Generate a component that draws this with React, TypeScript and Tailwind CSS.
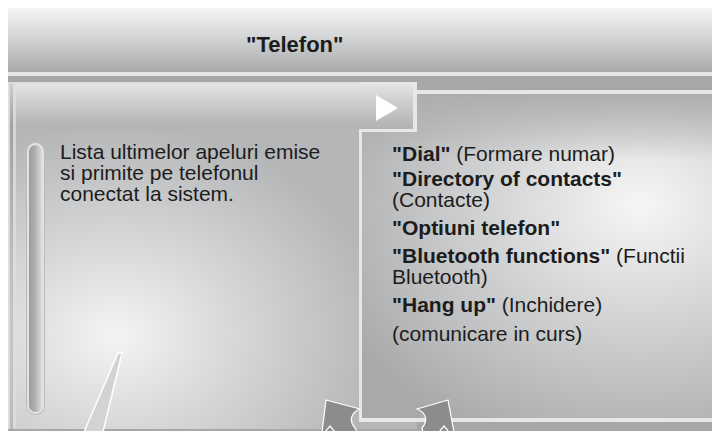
import React from "react";

const leftBg =
  "bg-fixed bg-[image:linear-gradient(to_bottom,rgba(229,230,231,0)_0px,rgba(229,230,231,0)_81px,#e6e7e8_82px,#cfd0d1_100px,#b3b4b6_126px,rgba(179,180,182,0)_132px),radial-gradient(ellipse_270px_210px_at_115px_335px,#f4f4f4_0%,#d6d7d8_45%,#b5b6b8_100%)]";

const rightBg =
  "bg-fixed bg-[image:linear-gradient(to_bottom,#acadaf_92px,rgba(172,173,175,0)_160px),radial-gradient(ellipse_340px_260px_at_640px_205px,#f6f6f6_0%,#d2d3d4_45%,#a8a9ab_100%)]";

function Item({ b, r }: { b: string; r?: string }) {
  return (
    <p>
      <span className="font-bold">"{b}"</span>
      {r ? ` ${r}` : ""}
    </p>
  );
}

export default function App() {
  return (
    <div className="relative w-[712px] h-[431px] overflow-hidden bg-white font-['Liberation_Sans',Arial,sans-serif] text-[#1c1c1c]">
      <div className="flex flex-col h-full pl-[8px] pt-[8px]">
        {/* Header */}
        <div className="h-[64px] bg-[linear-gradient(to_bottom,#f4f4f4,#d4d5d6_45%,#a7a8aa)] pl-[238px] pt-[26px]">
          <span className="font-bold text-[22px] leading-[22px]">"Telefon"</span>
        </div>
        <div className="h-[4px] bg-[#e4e5e6]" />

        {/* Body */}
        <div className="flex-1 grid bg-[#a6a7a9] grid-cols-[351px_58px_1fr] grid-rows-[6px_8px_42px_286px_4px_7px_2px]">
          {/* Left panel */}
          <div
            className={`col-start-1 col-end-3 row-start-2 row-end-7 border-l-2 border-t-2 border-[#dcdddf] flex ${leftBg}`}
          >
            <div className="w-[3px] bg-black/10" />
            <div className="w-[3px] mt-[4px] bg-[#dcdddf]/80" />
            <div className="flex items-start pl-[11px] pt-[59px]">
              <div className="w-[17px] h-[271px] rounded-full border-2 border-[#e1e2e3] bg-[linear-gradient(to_right,#9c9d9f,#abacae_40%,#cacbcc_80%,#dedfe0)] shadow-[0_0_0_1px_#b9babc]" />
              <p className="ml-[16px] mt-[-2px] w-[270px] text-[21px] leading-[21px]">
                Lista ultimelor apeluri emise si primite pe telefonul conectat la sistem.
              </p>
            </div>
          </div>

          {/* Right panel */}
          <div
            className={`col-start-2 col-end-4 row-start-3 row-end-6 border-t-4 border-l-[3px] border-b-4 border-[#e6e7e8] pl-[30px] pt-[49px] text-[21px] leading-[21px] ${rightBg}`}
          >
            <div className="flex flex-col gap-[7px]">
              <Item b="Dial" r="(Formare numar)" />
              <div className="mt-[-3px]">
                <Item b="Directory of contacts" r="(Contacte)" />
              </div>
              <Item b="Optiuni telefon" />
              <Item b="Bluetooth functions" r="(Functii Bluetooth)" />
              <Item b="Hang up" r="(Inchidere)" />
              <p className="mt-[1px]">(comunicare in curs)</p>
            </div>
          </div>

          {/* Tab with play triangle */}
          <div
            className={`col-start-2 col-end-3 row-start-2 row-end-4 z-10 border-r-4 border-b-[3px] border-[#e6e7e8] flex items-start justify-center pt-[13px] pl-[2px] ${leftBg}`}
          >
            <svg width="22" height="26" viewBox="0 0 22 26">
              <polygon points="0,0 22,13 0,26" fill="#ffffff" />
            </svg>
          </div>
        </div>
      </div>

      {/* Annotation overlay */}
      <svg
        className="absolute inset-0 pointer-events-none z-20"
        width="712"
        height="431"
        viewBox="0 0 712 431"
      >
        <polygon
          points="118,353 122,353 103,432 84,432"
          fill="#d2d3d4"
          stroke="#ffffff"
          strokeWidth="1.5"
        />
        <path
          d="M326,400 L360,409 C352,412 348,420 355,428 L357,432 L322,432 Z"
          fill="#8b8c8e"
          stroke="#ffffff"
          strokeWidth="1.2"
        />
        <polyline points="325,432 330,426 335,432" fill="none" stroke="#ffffff" strokeWidth="1.2" />
        <path
          d="M448,400 L417,409 C425,412 429,420 422,428 L423,432 L454,432 Z"
          fill="#8b8c8e"
          stroke="#ffffff"
          strokeWidth="1.2"
        />
        <polyline points="439,432 444,426 449,432" fill="none" stroke="#ffffff" strokeWidth="1.2" />
      </svg>
    </div>
  );
}
